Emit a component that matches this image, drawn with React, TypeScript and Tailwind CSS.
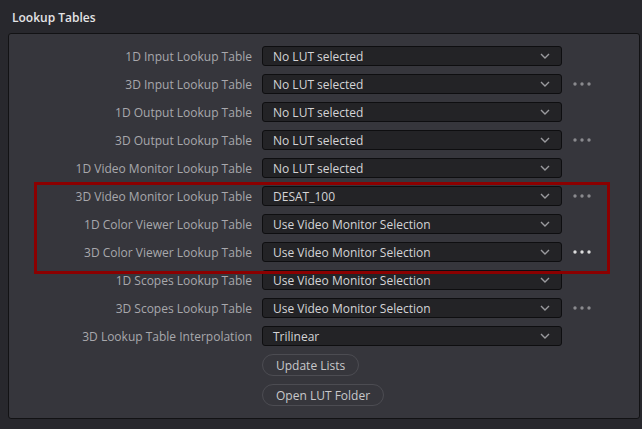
const rows: { label: string; value: string; dots?: "dim" | "bright" }[] = [
  { label: "1D Input Lookup Table", value: "No LUT selected" },
  { label: "3D Input Lookup Table", value: "No LUT selected", dots: "dim" },
  { label: "1D Output Lookup Table", value: "No LUT selected" },
  { label: "3D Output Lookup Table", value: "No LUT selected", dots: "dim" },
  { label: "1D Video Monitor Lookup Table", value: "No LUT selected" },
  { label: "3D Video Monitor Lookup Table", value: "DESAT_100", dots: "dim" },
  { label: "1D Color Viewer Lookup Table", value: "Use Video Monitor Selection" },
  { label: "3D Color Viewer Lookup Table", value: "Use Video Monitor Selection", dots: "bright" },
  { label: "1D Scopes Lookup Table", value: "Use Video Monitor Selection" },
  { label: "3D Scopes Lookup Table", value: "Use Video Monitor Selection", dots: "dim" },
  { label: "3D Lookup Table Interpolation", value: "Trilinear" },
];

function Chevron() {
  return (
    <svg width="10" height="6" viewBox="0 0 10 6" className="shrink-0">
      <path d="M1 1l4 4 4-4" fill="none" stroke="#9a9a9e" strokeWidth="1.4" />
    </svg>
  );
}

function Dots({ bright }: { bright: boolean }) {
  const c = bright ? "#dcdcdc" : "#8a8a8e";
  return (
    <svg width="20" height="4" viewBox="0 0 20 4">
      <circle cx="2" cy="2" r="1.7" fill={c} />
      <circle cx="9" cy="2" r="1.7" fill={c} />
      <circle cx="16" cy="2" r="1.7" fill={c} />
    </svg>
  );
}

export default function App() {
  return (
    <div className="relative h-[429px] w-[642px] overflow-hidden bg-[#28282d] font-['Open_Sans',sans-serif] text-[12px]">
      <div className="flex h-[33px] items-center pl-[12px] pt-[2px] font-semibold text-[#e4e4e6]">Lookup Tables</div>
      <div className="ml-[8px] h-[386px] w-[632px] rounded-[3px] border border-[#121214] bg-[#36363c] pt-[12px]">
        <div className="flex flex-col gap-[8px]">
          {rows.map((r) => (
            <div key={r.label} className="flex h-[20px] items-center">
              <div className="w-[243px] pt-[2px] text-right leading-[20px] text-[#a8a8ac]">{r.label}</div>
              <div className="ml-[10px] flex h-[20px] w-[300px] items-center justify-between rounded-[3px] border border-[#0e0e10] bg-[#232326] pl-[10px] pr-[11px] text-[#d4d4d6]">
                <span className="pt-[2px] leading-[18px]">{r.value}</span>
                <Chevron />
              </div>
              {r.dots && (
                <div className="ml-[11px] flex items-center">
                  <Dots bright={r.dots === "bright"} />
                </div>
              )}
            </div>
          ))}
          <div className="ml-[253px] flex flex-col items-start gap-[8px]">
            <button className="h-[22px] rounded-full border border-[#4c4c52] px-[13px] pt-[1px] leading-[20px] text-[#c8c8ca]">Update Lists</button>
            <button className="h-[22px] rounded-full border border-[#4c4c52] px-[13px] pt-[1px] leading-[20px] text-[#c8c8ca]">Open LUT Folder</button>
          </div>
        </div>
      </div>
      <div className="pointer-events-none absolute left-[34px] top-[182px] h-[92px] w-[576px] border-[3px] border-[#8b0000]" />
    </div>
  );
}
